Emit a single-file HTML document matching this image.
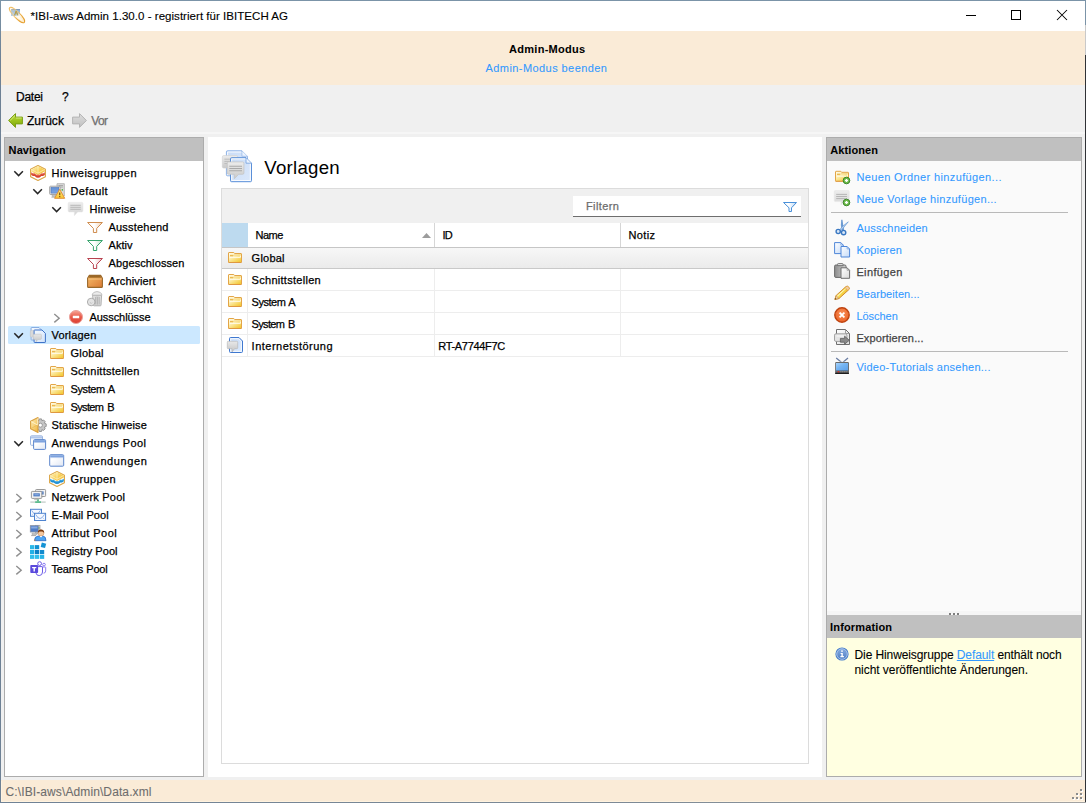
<!DOCTYPE html><html><head><meta charset="utf-8"><title>IBI-aws Admin</title><style>html,body{margin:0;padding:0;width:1086px;height:803px;overflow:hidden;background:#f0f0f0}
body{position:relative;font-family:"Liberation Sans",sans-serif;font-size:12px;color:#000}
.a{position:absolute;display:block}
.a svg{display:block;width:100%;height:100%;overflow:visible}
.t{position:absolute;white-space:nowrap;line-height:16px;height:16px;font-size:12px;-webkit-text-stroke:0.25px currentColor}
.b{font-weight:bold;-webkit-text-stroke:0.05px currentColor}
.ctr{text-align:center}
.lnk{color:#3399ff;-webkit-text-stroke:0.08px currentColor}
.u{text-decoration:underline}
.dis{color:#6e6e6e}
.dk{color:#444}
.ph{color:#6d6d6d}
.st{color:#6d6d6d;-webkit-text-stroke:0.08px currentColor}
.ttl{-webkit-text-stroke:0.12px currentColor}
.h1{font-size:18.67px;line-height:24px;height:24px;-webkit-text-stroke:0}
.panel{border:1px solid #a6a6a6;box-sizing:border-box}
.inf{-webkit-text-stroke:0.08px currentColor}
</style></head><body>
<div class="a" style="left:0px;top:0px;width:1086px;height:803px;background:#f0f0f0;"></div>
<div class="a" style="left:1px;top:1px;width:1084px;height:30px;background:#fff;"></div>
<div class="a" style="left:1px;top:31px;width:1084px;height:54px;background:#faebd7;"></div>
<div class="a" style="left:1px;top:780px;width:1084px;height:22px;background:#faebd7;"></div>
<div class="a" style="left:0px;top:0px;width:1086px;height:1px;background:#7b94a8;"></div>
<div class="a" style="left:0px;top:0px;width:1px;height:803px;background:linear-gradient(#7b94a8,#6e8195 60px);"></div>
<div class="a" style="left:1085px;top:0px;width:1px;height:803px;background:#303236;"></div>
<div class="a" style="left:1085px;top:25px;width:1px;height:30px;background:#c9c9c9;"></div>
<div class="a" style="left:1085px;top:0px;width:1px;height:25px;background:#7b94a8;"></div>
<div class="a" style="left:0px;top:802px;width:1086px;height:1px;background:linear-gradient(90deg,#6f8296,#7d8a96 60%,#a2a2a2);"></div>
<div class="a" style="left:1px;top:781px;width:1px;height:21px;background:#fff3e0;"></div>
<div class="a" style="left:1px;top:801px;width:1084px;height:1px;background:#fff3e0;"></div>
<div class="a" style="left:9px;top:7px;width:16px;height:16px"><svg viewBox="0 0 16 16"><defs><linearGradient id="apb_1" x1="0" y1="0" x2="0" y2="1"><stop offset="0" stop-color="#5f7fa6"/><stop offset=".2" stop-color="#8fb2d8"/><stop offset="1" stop-color="#b5d3f3"/></linearGradient>
<linearGradient id="apf_1" x1="0" y1="0" x2="1" y2="0"><stop offset="0" stop-color="#fde9c0" stop-opacity=".35"/><stop offset=".48" stop-color="#fff6e2" stop-opacity=".1"/><stop offset=".6" stop-color="#fffaf0" stop-opacity=".9"/><stop offset="1" stop-color="#fff1d6" stop-opacity="1"/></linearGradient>
<linearGradient id="aps_1" x1="0" y1="0" x2="1" y2="0"><stop offset="0" stop-color="#efb650"/><stop offset=".35" stop-color="#f3cb82" stop-opacity=".75"/><stop offset=".6" stop-color="#ecb048"/><stop offset="1" stop-color="#e39a28"/></linearGradient></defs>
<rect x="2" y="2.1" width="9" height="6.9" fill="url(#apb_1)"/>
<path d="M5 8.4 L6.5 3.8 L7.6 3.8 L9.4 8.4 L8.2 8.4 L7 5.4 L6.2 8.4Z" fill="#a08018"/>
<g transform="rotate(45 8 8)"><ellipse cx="8" cy="8" rx="10.4" ry="3" fill="url(#apf_1)" stroke="url(#aps_1)" stroke-width="1"/>
<ellipse cx="8.6" cy="8.3" rx="8.6" ry="1.6" fill="none" stroke="#f4d290" stroke-width=".6" opacity=".7" stroke-dasharray="1.2 .8"/></g></svg></div>
<div class="t ttl" style="left:30.5px;top:8px;font-size:11.5px;letter-spacing:0.038px;">*IBI-aws Admin 1.30.0 - registriert für IBITECH AG</div>
<div class="a" style="left:966px;top:10px;width:11px;height:11px"><svg viewBox="0 0 11 11"><rect x="0" y="5" width="10" height="1" fill="#000"/></svg></div>
<div class="a" style="left:1011px;top:10px;width:11px;height:11px"><svg viewBox="0 0 11 11"><rect x=".5" y=".5" width="9" height="9" fill="none" stroke="#000" stroke-width="1"/></svg></div>
<div class="a" style="left:1057px;top:10px;width:11px;height:11px"><svg viewBox="0 0 11 11"><path d="M0 0L10 10M10 0L0 10" stroke="#000" stroke-width="1.05" fill="none"/></svg></div>
<div class="t b" style="left:509.0px;top:41px;font-size:11px;letter-spacing:0.284px;">Admin-Modus</div>
<div class="t lnk" style="left:485.5px;top:60px;font-size:11px;letter-spacing:0.429px;">Admin-Modus beenden</div>
<div class="t " style="left:16.0px;top:89px;letter-spacing:-0.247px;">Datei</div>
<div class="t " style="left:62px;top:89px;">?</div>
<div class="a" style="left:8px;top:113px;width:16px;height:16px"><svg viewBox="0 0 16 16"><defs><linearGradient id="bkg_5" x1="0" y1="0" x2="0" y2="1"><stop offset="0" stop-color="#c3dd4a"/><stop offset=".5" stop-color="#9cc31c"/><stop offset="1" stop-color="#7ea70c"/></linearGradient></defs>
<path d="M7.5 .6 L.6 7.5 L7.5 14.4 L7.5 10.9 L14.4 10.9 L14.4 4.1 L7.5 4.1Z" fill="url(#bkg_5)" stroke="#7a9e14" stroke-width="1" stroke-linejoin="round"/>
<path d="M7 2.6 L2.2 7.4 M8 5 L13.6 5" stroke="#e3f19a" stroke-width=".9" fill="none" opacity=".8"/></svg></div>
<div class="t " style="left:27.0px;top:113px;letter-spacing:0.042px;">Zurück</div>
<div class="a" style="left:72px;top:113px;width:16px;height:16px"><svg viewBox="0 0 16 16"><defs><linearGradient id="fwg_6" x1="0" y1="0" x2="0" y2="1"><stop offset="0" stop-color="#dedede"/><stop offset="1" stop-color="#bfbfbf"/></linearGradient></defs>
<path d="M7.5 .6 L14.4 7.5 L7.5 14.4 L7.5 10.9 L.6 10.9 L.6 4.1 L7.5 4.1Z" fill="url(#fwg_6)" stroke="#b4b4b4" stroke-width="1" stroke-linejoin="round"/></svg></div>
<div class="t dis" style="left:91.3px;top:113px;letter-spacing:-0.688px;">Vor</div>
<div class="a" style="left:1px;top:132px;width:1084px;height:2px;background:#f6f6f6;"></div>
<div class="a" style="left:4px;top:137px;width:200px;height:640px;background:#fff;border:1px solid #acacac;box-sizing:border-box"></div>
<div class="a" style="left:5px;top:138px;width:198px;height:23px;background:#c0c0c0;"></div>
<div class="t b" style="left:8.6px;top:142px;font-size:11px;letter-spacing:0.109px;">Navigation</div>
<div class="a" style="left:8px;top:326px;width:192px;height:18px;background:#cce8ff;border-radius:1.5px"></div>
<div class="a" style="left:11px;top:165px;width:16px;height:16px"><svg viewBox="0 0 16 16"><path d="M3.3 6.3 L7.6 10.6 L11.9 6.3" fill="none" stroke="#262626" stroke-width="1.5"/></svg></div>
<div class="a" style="left:30px;top:165px;width:16px;height:16px"><svg viewBox="0 0 16 16"><defs><linearGradient id="hb1t_8" x1="0" y1="0" x2="1" y2="1"><stop offset="0" stop-color="#fff4c4"/><stop offset=".55" stop-color="#f8d057"/><stop offset="1" stop-color="#f2b93a"/></linearGradient></defs>
<path d="M8 .6 L15.4 4.3 V11.7 L8 15.4 L.6 11.7 V4.3Z" fill="#fff" stroke="#dba545" stroke-width="1.1" stroke-linejoin="round"/>
<path d="M8 1.1 L14.8 4.5 V6.6 L8 10 L1.2 6.6 V4.5Z" fill="url(#hb1t_8)"/>
<path d="M8 1.6 V8.4 M1.6 4.6 L8 8.2 L14.4 4.6" stroke="#fff8d8" stroke-width=".8" fill="none" opacity=".75"/>
<g transform="translate(0 .5)"><path d="M1.2 6.9 L3 8 L4.6 7.9 L6.4 9.3 L8 9.3 L9.6 9.3 L11.4 7.9 L13 8 L14.8 6.9 V9.4 L13 10.6 L11.4 10.5 L9.6 11.9 L8 12.2 L6.4 11.9 L4.6 10.5 L3 10.6 L1.2 9.4Z" fill="#d6442f"/>
<path d="M1.2 7.4 L3 8.5 L4.6 8.4 L6.4 9.8 L8 9.9 L9.6 9.8 L11.4 8.4 L13 8.5 L14.8 7.4" fill="none" stroke="#ee7d62" stroke-width=".8" opacity=".8"/></g></svg></div>
<div class="t " style="left:51.5px;top:165px;font-size:11px;letter-spacing:0.476px;">Hinweisgruppen</div>
<div class="a" style="left:30px;top:183px;width:16px;height:16px"><svg viewBox="0 0 16 16"><path d="M3.3 6.3 L7.6 10.6 L11.9 6.3" fill="none" stroke="#262626" stroke-width="1.5"/></svg></div>
<div class="a" style="left:49px;top:183px;width:16px;height:16px"><svg viewBox="0 0 16 16"><defs><linearGradient id="dfs_10" x1="0" y1="0" x2="0" y2="1"><stop offset="0" stop-color="#5f8fd6"/><stop offset="1" stop-color="#7fa6e2"/></linearGradient>
<linearGradient id="dfw_10" x1="0" y1="0" x2="0" y2="1"><stop offset="0" stop-color="#fff08a"/><stop offset="1" stop-color="#f9c52c"/></linearGradient></defs>
<path d="M8 .7 H15.3 V13 H8Z" fill="#dcdcdc" stroke="#a9a9a9" stroke-width=".8"/>
<path d="M9.5 2.5H14M9.5 4H14" stroke="#9c9c9c" stroke-width=".8"/><rect x="12.6" y="6.2" width="1.4" height="1.4" fill="#3fae3a"/>
<rect x=".7" y="3.2" width="10.3" height="8.3" rx=".8" fill="#e9e9e9" stroke="#9b9b9b" stroke-width=".9"/>
<rect x="2" y="4.5" width="7.7" height="5.6" fill="url(#dfs_10)" stroke="#4a73b8" stroke-width=".6"/>
<path d="M3.2 12 H7 V13.6 H3.2Z M2.4 14.3H8" fill="#cfcfcf" stroke="#a9a9a9" stroke-width=".7"/>
<path d="M10.7 6.3 L15.7 15.3 H5.6Z" fill="url(#dfw_10)" stroke="#e2913a" stroke-width="1" stroke-linejoin="round"/>
<path d="M10.7 9.4 V12.3" stroke="#8a5a10" stroke-width="1.3"/><rect x="10.05" y="13" width="1.3" height="1.2" fill="#8a5a10"/></svg></div>
<div class="t " style="left:70.5px;top:183px;font-size:11px;letter-spacing:0.387px;">Default</div>
<div class="a" style="left:49px;top:201px;width:16px;height:16px"><svg viewBox="0 0 16 16"><path d="M3.3 6.3 L7.6 10.6 L11.9 6.3" fill="none" stroke="#262626" stroke-width="1.5"/></svg></div>
<div class="a" style="left:68px;top:201px;width:16px;height:16px"><svg viewBox="0 0 16 16"><defs><linearGradient id="hwg_12" x1="0" y1="0" x2="0" y2="1"><stop offset="0" stop-color="#ededed"/><stop offset="1" stop-color="#d2d2d2"/></linearGradient></defs>
<path d="M1.2 1.4 H13.8 Q14.9 1.4 14.9 2.5 V9.8 Q14.9 10.9 13.8 10.9 H9.6 L6.4 14.6 V10.9 H1.2 Q.2 10.9 .2 9.8 V2.5 Q.2 1.4 1.2 1.4Z" fill="url(#hwg_12)" stroke="#e4e4e4" stroke-width=".6"/>
<path d="M2.3 4.3H12.8M2.3 6.3H12.8M2.3 8.3H12.8" stroke="#b3b3b3" stroke-width=".9"/></svg></div>
<div class="t " style="left:89.5px;top:201px;font-size:11px;letter-spacing:0.219px;">Hinweise</div>
<div class="a" style="left:87px;top:219px;width:16px;height:16px"><svg viewBox="0 0 16 16"><defs><linearGradient id="fo_13" x1="0" y1="0" x2="1" y2="0"><stop offset=".45" stop-color="#fff"/><stop offset="1" stop-color="#f1d3b5"/></linearGradient></defs>
<path d="M.6 3.5 H15.4 L9.7 9.4 V13.5 H6.4 V9.4Z" fill="url(#fo_13)" stroke="#cf8d4f" stroke-width="1" stroke-linejoin="miter"/></svg></div>
<div class="t " style="left:108.5px;top:219px;font-size:11px;letter-spacing:0.207px;">Ausstehend</div>
<div class="a" style="left:87px;top:237px;width:16px;height:16px"><svg viewBox="0 0 16 16"><defs><linearGradient id="fg_14" x1="0" y1="0" x2="1" y2="0"><stop offset=".45" stop-color="#fff"/><stop offset="1" stop-color="#bfe6cf"/></linearGradient></defs>
<path d="M.6 3.5 H15.4 L9.7 9.4 V13.5 H6.4 V9.4Z" fill="url(#fg_14)" stroke="#35a36c" stroke-width="1" stroke-linejoin="miter"/></svg></div>
<div class="t " style="left:108.5px;top:237px;font-size:11px;letter-spacing:0.066px;">Aktiv</div>
<div class="a" style="left:87px;top:255px;width:16px;height:16px"><svg viewBox="0 0 16 16"><defs><linearGradient id="fr_15" x1="0" y1="0" x2="1" y2="0"><stop offset=".45" stop-color="#fff"/><stop offset="1" stop-color="#eec0c4"/></linearGradient></defs>
<path d="M.6 3.5 H15.4 L9.7 9.4 V13.5 H6.4 V9.4Z" fill="url(#fr_15)" stroke="#b8414f" stroke-width="1" stroke-linejoin="miter"/></svg></div>
<div class="t " style="left:108.5px;top:255px;font-size:11px;letter-spacing:0.113px;">Abgeschlossen</div>
<div class="a" style="left:87px;top:273px;width:16px;height:16px"><svg viewBox="0 0 16 16"><defs><linearGradient id="arf_16" x1="0" y1="0" x2="1" y2="1"><stop offset="0" stop-color="#f6bb68"/><stop offset="1" stop-color="#d97a35"/></linearGradient>
<linearGradient id="art_16" x1="0" y1="0" x2="0" y2="1"><stop offset="0" stop-color="#8a5a1e"/><stop offset="1" stop-color="#c98c3e"/></linearGradient></defs>
<path d="M2.2 2.4 H13.8 L15.4 5.3 V13.4 Q15.4 14.4 14.4 14.4 H1.6 Q.6 14.4 .6 13.4 V5.3Z" fill="url(#arf_16)" stroke="#9a682a" stroke-width="1.1" stroke-linejoin="round"/>
<path d="M2.5 2.9 H13.5 L14.8 5.3 H1.2Z" fill="url(#art_16)"/>
<path d="M1.3 6 H14.7" stroke="#fbd9a0" stroke-width=".8" opacity=".8"/></svg></div>
<div class="t " style="left:108.5px;top:273px;font-size:11px;letter-spacing:0.137px;">Archiviert</div>
<div class="a" style="left:87px;top:291px;width:16px;height:16px"><svg viewBox="0 0 16 16"><defs><linearGradient id="trg_17" x1="0" y1="0" x2="1" y2="0"><stop offset="0" stop-color="#e9e9e9"/><stop offset=".5" stop-color="#cfcfcf"/><stop offset="1" stop-color="#e4e4e4"/></linearGradient></defs>
<path d="M5.6 4.2 H14.6 L14 14.2 Q14 14.8 13.3 14.8 H7.2 Q6.5 14.8 6.4 14.2Z" fill="url(#trg_17)" stroke="#a9a9a9" stroke-width=".9"/>
<path d="M5.2 4.2 Q5.2 1.2 10 .6 Q14.9 1.2 14.9 4.2Z" fill="#ececec" stroke="#b4b4b4" stroke-width=".8"/>
<path d="M8.6 6V13.5M10.4 6V13.5M12.2 6V13.5" stroke="#b0b0b0" stroke-width=".9"/>
<circle cx="4.2" cy="11" r="3.8" fill="#e3e3e3" stroke="#a6a6a6" stroke-width=".9"/>
<path d="M2.8 11.4 L4.4 12.4 L5.2 11.6" stroke="#b7b7b7" stroke-width=".8" fill="none"/></svg></div>
<div class="t " style="left:108.5px;top:291px;font-size:11px;letter-spacing:0.081px;">Gelöscht</div>
<div class="a" style="left:49px;top:309px;width:16px;height:16px"><svg viewBox="0 0 16 16"><path d="M5.3 5 L10.2 9.2 L5.3 13.4" fill="none" stroke="#8f8f8f" stroke-width="1.4"/></svg></div>
<div class="a" style="left:68px;top:309px;width:16px;height:16px"><svg viewBox="0 0 16 16"><defs><linearGradient id="exg_19" x1="0" y1="0" x2="0" y2="1"><stop offset="0" stop-color="#f7a596"/><stop offset=".5" stop-color="#e85a49"/><stop offset="1" stop-color="#dc4034"/></linearGradient></defs>
<circle cx="8" cy="8" r="6.5" fill="url(#exg_19)" stroke="#eba29c" stroke-width="1"/>
<rect x="4.8" y="6.8" width="6.4" height="2.5" rx=".3" fill="#fff"/></svg></div>
<div class="t " style="left:89.5px;top:309px;font-size:11px;letter-spacing:-0.069px;">Ausschlüsse</div>
<div class="a" style="left:11px;top:327px;width:16px;height:16px"><svg viewBox="0 0 16 16"><path d="M3.3 6.3 L7.6 10.6 L11.9 6.3" fill="none" stroke="#262626" stroke-width="1.5"/></svg></div>
<div class="a" style="left:30px;top:327px;width:16px;height:16px"><svg viewBox="0 0 16 16"><defs><linearGradient id="vd1_21" x1="0" y1="0" x2="1" y2="1"><stop offset="0" stop-color="#f7fbff"/><stop offset="1" stop-color="#cfe1fa"/></linearGradient><linearGradient id="vbb_21" x1="0" y1="0" x2="0" y2="1"><stop offset="0" stop-color="#e6e6e6"/><stop offset="1" stop-color="#c6c6c6"/></linearGradient></defs>
<path d="M1.6 .5 H9 L12 3.5 V12.5 Q12 13 11.5 13 H1.6 Q1.1 13 1.1 12.5 V1 Q1.1 .5 1.6 .5Z" fill="url(#vd1_21)" stroke="#7fa5de" stroke-width=".9"/>
<rect x=".3" y="3.4" width="7.2" height="6.6" rx="1" fill="#d9d9d9" stroke="#c4c4c4" stroke-width=".5"/>
<path d="M4.6 3 H12 L15.4 6.4 V15 Q15.4 15.5 14.9 15.5 H4.6 Q4.1 15.5 4.1 15 V3.5 Q4.1 3 4.6 3Z" fill="url(#vd1_21)" stroke="#3f73c8" stroke-width="1"/>
<path d="M3.9 7.2 H10.6 Q11.4 7.2 11.4 8 V11.6 Q11.4 12.4 10.6 12.4 H8 L6 14.8 V12.4 H3.9 Q3.1 12.4 3.1 11.6 V8 Q3.1 7.2 3.9 7.2Z" fill="url(#vbb_21)" stroke="#bdbdbd" stroke-width=".5"/></svg></div>
<div class="t " style="left:51.5px;top:327px;font-size:11px;letter-spacing:0.191px;">Vorlagen</div>
<div class="a" style="left:49px;top:346px;width:16px;height:16px"><svg viewBox="0 0 16 16"><defs><linearGradient id="fdg_22" x1="0" y1="0" x2=".7" y2="1"><stop offset="0" stop-color="#fffdf0"/><stop offset=".4" stop-color="#fef2bd"/><stop offset="1" stop-color="#f4cb3c"/></linearGradient></defs>
<path d="M1.5 3 Q1.5 2.5 2 2.5 H6.8 L7.6 3.5 H14 Q14.5 3.5 14.5 4 V12 Q14.5 12.5 14 12.5 H2 Q1.5 12.5 1.5 12Z" fill="url(#fdg_22)" stroke="#e3a547" stroke-width="1"/>
<path d="M1.6 12.5H14.4" stroke="#de8f3c" stroke-width="1" opacity=".6"/>
<path d="M3 5.6 H6" stroke="#ecb850" stroke-width="1.5"/>
<path d="M5.8 5.8 L7 5 H13.4" stroke="#f3d07a" stroke-width=".9" fill="none"/>
<path d="M2.6 7.4 H13.4 V5.6" stroke="#fffdf2" stroke-width=".9" fill="none" opacity=".95"/></svg></div>
<div class="t " style="left:70.5px;top:345px;font-size:11px;letter-spacing:0.246px;">Global</div>
<div class="a" style="left:49px;top:364px;width:16px;height:16px"><svg viewBox="0 0 16 16"><defs><linearGradient id="fdg_23" x1="0" y1="0" x2=".7" y2="1"><stop offset="0" stop-color="#fffdf0"/><stop offset=".4" stop-color="#fef2bd"/><stop offset="1" stop-color="#f4cb3c"/></linearGradient></defs>
<path d="M1.5 3 Q1.5 2.5 2 2.5 H6.8 L7.6 3.5 H14 Q14.5 3.5 14.5 4 V12 Q14.5 12.5 14 12.5 H2 Q1.5 12.5 1.5 12Z" fill="url(#fdg_23)" stroke="#e3a547" stroke-width="1"/>
<path d="M1.6 12.5H14.4" stroke="#de8f3c" stroke-width="1" opacity=".6"/>
<path d="M3 5.6 H6" stroke="#ecb850" stroke-width="1.5"/>
<path d="M5.8 5.8 L7 5 H13.4" stroke="#f3d07a" stroke-width=".9" fill="none"/>
<path d="M2.6 7.4 H13.4 V5.6" stroke="#fffdf2" stroke-width=".9" fill="none" opacity=".95"/></svg></div>
<div class="t " style="left:70.5px;top:363px;font-size:11px;letter-spacing:0.264px;">Schnittstellen</div>
<div class="a" style="left:49px;top:382px;width:16px;height:16px"><svg viewBox="0 0 16 16"><defs><linearGradient id="fdg_24" x1="0" y1="0" x2=".7" y2="1"><stop offset="0" stop-color="#fffdf0"/><stop offset=".4" stop-color="#fef2bd"/><stop offset="1" stop-color="#f4cb3c"/></linearGradient></defs>
<path d="M1.5 3 Q1.5 2.5 2 2.5 H6.8 L7.6 3.5 H14 Q14.5 3.5 14.5 4 V12 Q14.5 12.5 14 12.5 H2 Q1.5 12.5 1.5 12Z" fill="url(#fdg_24)" stroke="#e3a547" stroke-width="1"/>
<path d="M1.6 12.5H14.4" stroke="#de8f3c" stroke-width="1" opacity=".6"/>
<path d="M3 5.6 H6" stroke="#ecb850" stroke-width="1.5"/>
<path d="M5.8 5.8 L7 5 H13.4" stroke="#f3d07a" stroke-width=".9" fill="none"/>
<path d="M2.6 7.4 H13.4 V5.6" stroke="#fffdf2" stroke-width=".9" fill="none" opacity=".95"/></svg></div>
<div class="t " style="left:70.5px;top:381px;font-size:11px;letter-spacing:-0.386px;word-spacing:0.81px;">System A</div>
<div class="a" style="left:49px;top:400px;width:16px;height:16px"><svg viewBox="0 0 16 16"><defs><linearGradient id="fdg_25" x1="0" y1="0" x2=".7" y2="1"><stop offset="0" stop-color="#fffdf0"/><stop offset=".4" stop-color="#fef2bd"/><stop offset="1" stop-color="#f4cb3c"/></linearGradient></defs>
<path d="M1.5 3 Q1.5 2.5 2 2.5 H6.8 L7.6 3.5 H14 Q14.5 3.5 14.5 4 V12 Q14.5 12.5 14 12.5 H2 Q1.5 12.5 1.5 12Z" fill="url(#fdg_25)" stroke="#e3a547" stroke-width="1"/>
<path d="M1.6 12.5H14.4" stroke="#de8f3c" stroke-width="1" opacity=".6"/>
<path d="M3 5.6 H6" stroke="#ecb850" stroke-width="1.5"/>
<path d="M5.8 5.8 L7 5 H13.4" stroke="#f3d07a" stroke-width=".9" fill="none"/>
<path d="M2.6 7.4 H13.4 V5.6" stroke="#fffdf2" stroke-width=".9" fill="none" opacity=".95"/></svg></div>
<div class="t " style="left:70.5px;top:399px;font-size:11px;letter-spacing:-0.632px;word-spacing:1.33px;">System B</div>
<div class="a" style="left:30px;top:417px;width:16px;height:16px"><svg viewBox="0 0 16 16"><defs><linearGradient id="stg_26" x1="0" y1="0" x2="1" y2="1"><stop offset="0" stop-color="#fff2bf"/><stop offset="1" stop-color="#eeb23a"/></linearGradient></defs>
<g transform="translate(10.4 8.2)"><path d="M-1.1 -6.3 H1.1 L1.5 -4.5 L3.2 -5.2 L4.8 -3.6 L3.9 -2 L5.8 -1.3 V1.3 L3.9 2 L4.8 3.6 L3.2 5.2 L1.5 4.5 L1.1 6.3 H-1.1 L-1.5 4.5 L-3.2 5.2 L-4.8 3.6 L-3.9 2 L-5.8 1.3 V-1.3 L-3.9 -2 L-4.8 -3.6 L-3.2 -5.2 L-1.5 -4.5Z" fill="#c6c6c6" stroke="#8c8c8c" stroke-width=".9"/><circle r="2" fill="#fff" stroke="#8c8c8c" stroke-width=".8"/></g>
<path d="M8 .6 V15.4 L.6 11.7 V4.3Z" fill="url(#stg_26)" stroke="#d9a040" stroke-width="1.1" stroke-linejoin="round"/>
<path d="M1.2 4.6 L7.6 8 V1.4" fill="none" stroke="#fff7d8" stroke-width=".9" opacity=".9"/>
<path d="M7.5 8 L1.2 11.4" fill="none" stroke="#e8b850" stroke-width=".7"/></svg></div>
<div class="t " style="left:51.5px;top:417px;font-size:11px;letter-spacing:0.137px;">Statische Hinweise</div>
<div class="a" style="left:11px;top:435px;width:16px;height:16px"><svg viewBox="0 0 16 16"><path d="M3.3 6.3 L7.6 10.6 L11.9 6.3" fill="none" stroke="#262626" stroke-width="1.5"/></svg></div>
<div class="a" style="left:30px;top:435px;width:16px;height:16px"><svg viewBox="0 0 16 16"><defs><linearGradient id="wg1_28" x1="0" y1="0" x2="1" y2="1"><stop offset=".3" stop-color="#fff"/><stop offset="1" stop-color="#dfe6f3"/></linearGradient></defs><g opacity="0.6"><rect x="0.5" y="0.8" width="12" height="9.5" rx="1" fill="url(#wg1_28)" stroke="#5c86cc" stroke-width="1"/>
<path d="M1 1.3 H12 V3.3 H1Z" fill="#7ea3de"/><path d="M1 3.6999999999999997 H12" stroke="#a9c2ea" stroke-width=".8"/></g><g opacity="1.0"><rect x="3.6" y="4.6" width="12" height="9.8" rx="1" fill="url(#wg1_28)" stroke="#5c86cc" stroke-width="1"/>
<path d="M4.1 5.1 H15.100000000000001 V7.1 H4.1Z" fill="#7ea3de"/><path d="M4.1 7.5 H15.100000000000001" stroke="#a9c2ea" stroke-width=".8"/></g></svg></div>
<div class="t " style="left:51.5px;top:435px;font-size:11px;letter-spacing:0.411px;">Anwendungs Pool</div>
<div class="a" style="left:49px;top:453px;width:16px;height:16px"><svg viewBox="0 0 16 16"><defs><linearGradient id="wg2_29" x1="0" y1="0" x2="1" y2="1"><stop offset=".3" stop-color="#fff"/><stop offset="1" stop-color="#dfe6f3"/></linearGradient></defs><g opacity="1.0"><rect x="0.7" y="1.7" width="14" height="11.5" rx="1" fill="url(#wg2_29)" stroke="#5c86cc" stroke-width="1"/>
<path d="M1.2 2.2 H14.2 V4.2 H1.2Z" fill="#7ea3de"/><path d="M1.2 4.6 H14.2" stroke="#a9c2ea" stroke-width=".8"/></g></svg></div>
<div class="t " style="left:70.5px;top:453px;font-size:11px;letter-spacing:0.592px;">Anwendungen</div>
<div class="a" style="left:49px;top:471px;width:16px;height:16px"><svg viewBox="0 0 16 16"><defs><linearGradient id="hb2t_30" x1="0" y1="0" x2="1" y2="1"><stop offset="0" stop-color="#fff4c4"/><stop offset=".55" stop-color="#f8d057"/><stop offset="1" stop-color="#f2b93a"/></linearGradient></defs>
<path d="M8 .6 L15.4 4.3 V11.7 L8 15.4 L.6 11.7 V4.3Z" fill="#fff" stroke="#dba545" stroke-width="1.1" stroke-linejoin="round"/>
<path d="M8 1.1 L14.8 4.5 V6.6 L8 10 L1.2 6.6 V4.5Z" fill="url(#hb2t_30)"/>
<path d="M8 1.6 V8.4 M1.6 4.6 L8 8.2 L14.4 4.6" stroke="#fff8d8" stroke-width=".8" fill="none" opacity=".75"/>
<g transform="translate(0 .9)"><path d="M1.2 6.9 L3 8 L4.6 7.9 L6.4 9.3 L8 9.3 L9.6 9.3 L11.4 7.9 L13 8 L14.8 6.9 V9.4 L13 10.6 L11.4 10.5 L9.6 11.9 L8 12.2 L6.4 11.9 L4.6 10.5 L3 10.6 L1.2 9.4Z" fill="#1f8fd2"/>
<path d="M1.2 7.4 L3 8.5 L4.6 8.4 L6.4 9.8 L8 9.9 L9.6 9.8 L11.4 8.4 L13 8.5 L14.8 7.4" fill="none" stroke="#55b4ea" stroke-width=".8" opacity=".8"/></g></svg></div>
<div class="t " style="left:70.5px;top:471px;font-size:11px;letter-spacing:0.392px;">Gruppen</div>
<div class="a" style="left:11px;top:489px;width:16px;height:16px"><svg viewBox="0 0 16 16"><path d="M5.3 5 L10.2 9.2 L5.3 13.4" fill="none" stroke="#8f8f8f" stroke-width="1.4"/></svg></div>
<div class="a" style="left:30px;top:489px;width:16px;height:16px"><svg viewBox="0 0 16 16"><rect x="5.6" y="0.5" width="10" height="7" rx=".8" fill="#f3f3f3" stroke="#8f8f8f" stroke-width=".9"/><rect x="7.6" y="2.4" width="6" height="3.1" fill="#4a78c0"/><rect x="8.6" y="3.2" width="4" height="1.3" fill="#86a8de"/><rect x="1.4" y="2.4" width="10.4" height="7" rx=".8" fill="#f3f3f3" stroke="#8f8f8f" stroke-width=".9"/><rect x="3.4" y="4.3" width="6.4" height="3.1" fill="#4a78c0"/><rect x="4.4" y="5.1" width="4.4" height="1.3" fill="#86a8de"/><path d="M4.4 9.6 Q6.6 11 8.8 9.6 V10.8 H4.4Z" fill="#d6d6d6" stroke="#a6a6a6" stroke-width=".5"/>
<path d="M8 10.6 V12.8" stroke="#43b47a" stroke-width="1.6"/><path d="M.3 13.1 H15.7" stroke="#c3cdc8" stroke-width="1.3"/><path d="M5.2 13.1H11" stroke="#49b981" stroke-width="1.5"/></svg></div>
<div class="t " style="left:51.5px;top:489px;font-size:11px;letter-spacing:0.209px;">Netzwerk Pool</div>
<div class="a" style="left:11px;top:507px;width:16px;height:16px"><svg viewBox="0 0 16 16"><path d="M5.3 5 L10.2 9.2 L5.3 13.4" fill="none" stroke="#8f8f8f" stroke-width="1.4"/></svg></div>
<div class="a" style="left:30px;top:507px;width:16px;height:16px"><svg viewBox="0 0 16 16"><rect x="0.5" y="2.3" width="11" height="7" fill="#f6f9ff" stroke="#4f84cf" stroke-width="1"/><path d="M1.6 3.4000000000000004 Q6.0 11.4 10.4 3.4000000000000004" fill="none" stroke="#7ea6e2" stroke-width=".9"/><path d="M1.6 8.200000000000001 L4.08 5.96 M10.4 8.200000000000001 L7.92 5.96" stroke="#b5cbef" stroke-width=".8"/><rect x="4.5" y="6.3" width="11.1" height="7.199999999999999" fill="#f6f9ff" stroke="#4f84cf" stroke-width="1"/><path d="M5.6 7.4 Q10.05 15.639999999999997 14.500000000000002 7.4" fill="none" stroke="#7ea6e2" stroke-width=".9"/><path d="M5.6 12.4 L8.114 10.064 M14.500000000000002 12.4 L11.986 10.064" stroke="#b5cbef" stroke-width=".8"/></svg></div>
<div class="t " style="left:51.5px;top:507px;font-size:11px;letter-spacing:0.098px;">E-Mail Pool</div>
<div class="a" style="left:11px;top:525px;width:16px;height:16px"><svg viewBox="0 0 16 16"><path d="M5.3 5 L10.2 9.2 L5.3 13.4" fill="none" stroke="#8f8f8f" stroke-width="1.4"/></svg></div>
<div class="a" style="left:30px;top:525px;width:16px;height:16px"><svg viewBox="0 0 16 16"><rect x="5.6" y=".3" width="4.4" height="8" fill="#d8d8d8" stroke="#9d9d9d" stroke-width=".7"/><rect x="8.2" y="2.2" width="1.2" height="1.6" fill="#3fae3a"/>
<rect x=".3" y=".6" width="8" height="6.4" fill="#4f7cc6" stroke="#8a93a3" stroke-width=".8"/><rect x="1.2" y="1.5" width="6.2" height="2" fill="#86a9e0"/>
<path d="M2 8.2H7V9.6H2Z" fill="#cfcfcf" stroke="#a0a0a0" stroke-width=".6"/><path d="M1.2 10.6H6" stroke="#a6a6a6" stroke-width="1"/>
<path d="M4.4 15.7 Q4.6 11.4 8 11 H13 Q16 11.4 16 15.7Z" fill="#4ba3f3" stroke="#1f5fc0" stroke-width=".7"/>
<path d="M4.4 15.8 L5.4 14.6" stroke="#e58a2c" stroke-width="1"/>
<circle cx="11" cy="8" r="3" fill="#f5c9a0" stroke="#c98a5a" stroke-width=".5"/>
<path d="M7.9 8 Q7.6 4.6 11 4.5 Q14.4 4.6 14.1 8 Q13 6.4 11 6.6 Q9 6.4 7.9 8Z" fill="#7a3a10"/>
<path d="M9.5 11 L11 12.4 L12.5 11Z" fill="#fff"/></svg></div>
<div class="t " style="left:51.5px;top:525px;font-size:11px;letter-spacing:0.434px;">Attribut Pool</div>
<div class="a" style="left:11px;top:543px;width:16px;height:16px"><svg viewBox="0 0 16 16"><path d="M5.3 5 L10.2 9.2 L5.3 13.4" fill="none" stroke="#8f8f8f" stroke-width="1.4"/></svg></div>
<div class="a" style="left:30px;top:543px;width:16px;height:16px"><svg viewBox="0 0 16 16"><rect x="0" y="2.1" width="4.3" height="4.1" fill="#2bb8e9"/><rect x="4.9" y="2.1" width="4.3" height="4.1" fill="#1191d2"/><rect x="0" y="7" width="4.3" height="4.1" fill="#22b1e6"/><rect x="4.9" y="7" width="4.3" height="4.1" fill="#0b80c5"/><rect x="9.9" y="7" width="4.3" height="4.1" fill="#128acd"/><rect x="0" y="11.8" width="4.3" height="4.1" fill="#31beec"/><rect x="4.9" y="11.8" width="4.3" height="4.1" fill="#31beec"/><rect x="9.9" y="11.8" width="4.3" height="4.1" fill="#27b4e7"/><rect x="11.2" y=".1" width="4.5" height="4.5" fill="#1592d4" transform="rotate(15 13.4 2.3)"/></svg></div>
<div class="t " style="left:51.5px;top:543px;font-size:11px;letter-spacing:0.051px;">Registry Pool</div>
<div class="a" style="left:11px;top:561px;width:16px;height:16px"><svg viewBox="0 0 16 16"><path d="M5.3 5 L10.2 9.2 L5.3 13.4" fill="none" stroke="#8f8f8f" stroke-width="1.4"/></svg></div>
<div class="a" style="left:30px;top:561px;width:16px;height:16px"><svg viewBox="0 0 16 16"><circle cx="9.6" cy="2.6" r="1.9" fill="#fff" stroke="#6c5ce6" stroke-width="1"/>
<circle cx="14" cy="3.6" r="1.35" fill="#fff" stroke="#8373f0" stroke-width=".9"/>
<path d="M12.4 6 H15.2 Q15.7 6 15.7 6.5 V10 Q15.7 12 13.6 12.2" fill="#fff" stroke="#8373f0" stroke-width=".9"/>
<path d="M6.5 5.6 H12 Q12.5 5.6 12.5 6.1 V11 Q12.5 14.4 9.2 14.6 Q6.4 14.6 6 12" fill="#fff" stroke="#6c5ce6" stroke-width="1"/>
<rect x=".3" y="3.9" width="7.8" height="8.2" rx=".8" fill="#5a49dc"/>
<path d="M2.1 5.9H6.3V7.2H4.9V10.5H3.5V7.2H2.1Z" fill="#fff"/></svg></div>
<div class="t " style="left:51.5px;top:561px;font-size:11px;letter-spacing:-0.184px;word-spacing:0.41px;">Teams Pool</div>
<div class="a" style="left:208px;top:137px;width:614px;height:640px;background:#fff;"></div>
<div class="a" style="left:221px;top:150px;width:32px;height:32px"><svg viewBox="0 0 32 32"><defs><linearGradient id="bd1_41" x1="0" y1="0" x2="1" y2="1"><stop offset="0" stop-color="#c9dcf7"/><stop offset="1" stop-color="#dbe8fb"/></linearGradient>
<linearGradient id="bb1_41" x1="0" y1="0" x2="0" y2="1"><stop offset="0" stop-color="#ececec"/><stop offset="1" stop-color="#c9c9c9"/></linearGradient></defs><path d="M6.4 0.8 H20.9 L26.4 6.3 V24.8 Q26.4 25.8 25.4 25.8 H6.4 Q5.4 25.8 5.4 24.8 V1.8 Q5.4 0.8 6.4 0.8Z" fill="url(#bd1_41)" stroke="#8fb3e6" stroke-width="1"/><path d="M6.6000000000000005 2.0 H20.4 L25.2 6.8 V24.6 H6.6000000000000005Z" fill="none" stroke="#fff" stroke-width="1" opacity=".85"/><path d="M20.9 0.8 V6.3 H26.4" fill="#eef5ff" stroke="#8fb3e6" stroke-width=".8" opacity=".8"/><rect x="1.3" y="5.5" width="15.5" height="12.6" rx="1.6" fill="url(#bb1_41)" stroke="#d0d0d0" stroke-width=".6"/><path d="M3.4 9.2H9M3.4 11.4H9M3.4 13.6H9" stroke="#bcbcbc" stroke-width="1"/><path d="M10.5 7.7 H25.0 L30.5 13.2 V30.7 Q30.5 31.7 29.5 31.7 H10.5 Q9.5 31.7 9.5 30.7 V8.7 Q9.5 7.7 10.5 7.7Z" fill="url(#bd1_41)" stroke="#5a8fd8" stroke-width="1"/><path d="M10.7 8.9 H24.5 L29.3 13.7 V30.5 H10.7Z" fill="none" stroke="#fff" stroke-width="1" opacity=".85"/><path d="M25.0 7.7 V13.2 H30.5" fill="#eef5ff" stroke="#5a8fd8" stroke-width=".8" opacity=".8"/><path d="M7.6 11.9 H21.6 Q22.9 11.9 22.9 13.2 V23 Q22.9 24.3 21.6 24.3 H17.6 L13.4 28.8 L13.2 24.3 H7.6 Q6.3 24.3 6.3 23 V13.2 Q6.3 11.9 7.6 11.9Z" fill="url(#bb1_41)" stroke="#c2c2c2" stroke-width=".7"/>
<path d="M8.3 16.2H21M8.3 18.5H21M8.3 20.8H21" stroke="#a9a9a9" stroke-width="1.1"/></svg></div>
<div class="t h1" style="left:264.3px;top:156px;letter-spacing:0.247px;">Vorlagen</div>
<div class="a" style="left:221px;top:188px;width:588px;height:576px;background:#fff;border:1px solid #dcdcdc;box-sizing:border-box"></div>
<div class="a" style="left:222px;top:189px;width:586px;height:34px;background:#f0f0f0;"></div>
<div class="a" style="left:573px;top:196px;width:228px;height:20px;background:#fff;border-bottom:1px solid #6e6e6e"></div>
<div class="t ph" style="left:586.0px;top:198px;font-size:11px;letter-spacing:0.400px;">Filtern</div>
<div class="a" style="left:782px;top:199px;width:16px;height:16px"><svg viewBox="0 0 16 16"><defs><linearGradient id="flt_42" x1="0" y1="0" x2="1" y2="0"><stop offset=".4" stop-color="#fff"/><stop offset="1" stop-color="#b9d7f5"/></linearGradient></defs>
<path d="M1.5 3.5 H14.5 L9.5 8.8 V12.5 H7 V8.8Z" fill="url(#flt_42)" stroke="#4a90d9" stroke-width="1" stroke-linejoin="miter"/></svg></div>
<div class="a" style="left:222px;top:223px;width:26px;height:24px;background:#bddaef;"></div>
<div class="a" style="left:222px;top:247px;width:586px;height:1px;background:#c6c6c6;"></div>
<div class="a" style="left:434px;top:223px;width:1px;height:24px;background:#d6d6d6;"></div>
<div class="a" style="left:620px;top:223px;width:1px;height:24px;background:#d6d6d6;"></div>
<div class="t sb" style="left:255.6px;top:227px;font-size:11px;letter-spacing:-0.528px;">Name</div>
<div class="t sb" style="left:442.6px;top:227px;font-size:11px;letter-spacing:-0.976px;">ID</div>
<div class="t sb" style="left:628.4px;top:227px;font-size:11px;letter-spacing:0.385px;">Notiz</div>
<div class="a" style="left:422px;top:233px;width:9px;height:5px"><svg viewBox="0 0 9 5"><path d="M0 5 L4.5 0 L9 5Z" fill="#9c9c9c"/></svg></div>
<div class="a" style="left:222px;top:248px;width:586px;height:20px;background:linear-gradient(#f7f7f7,#ebebeb);"></div>
<div class="a" style="left:222px;top:268px;width:586px;height:1px;background:#c9c9c9;"></div>
<div class="a" style="left:227px;top:250px;width:16px;height:16px"><svg viewBox="0 0 16 16"><defs><linearGradient id="fdg_43" x1="0" y1="0" x2=".7" y2="1"><stop offset="0" stop-color="#fffdf0"/><stop offset=".4" stop-color="#fef2bd"/><stop offset="1" stop-color="#f4cb3c"/></linearGradient></defs>
<path d="M1.5 3 Q1.5 2.5 2 2.5 H6.8 L7.6 3.5 H14 Q14.5 3.5 14.5 4 V12 Q14.5 12.5 14 12.5 H2 Q1.5 12.5 1.5 12Z" fill="url(#fdg_43)" stroke="#e3a547" stroke-width="1"/>
<path d="M1.6 12.5H14.4" stroke="#de8f3c" stroke-width="1" opacity=".6"/>
<path d="M3 5.6 H6" stroke="#ecb850" stroke-width="1.5"/>
<path d="M5.8 5.8 L7 5 H13.4" stroke="#f3d07a" stroke-width=".9" fill="none"/>
<path d="M2.6 7.4 H13.4 V5.6" stroke="#fffdf2" stroke-width=".9" fill="none" opacity=".95"/></svg></div>
<div class="t " style="left:251.6px;top:250px;font-size:11px;letter-spacing:0.226px;">Global</div>
<div class="a" style="left:227px;top:272px;width:16px;height:16px"><svg viewBox="0 0 16 16"><defs><linearGradient id="fdg_44" x1="0" y1="0" x2=".7" y2="1"><stop offset="0" stop-color="#fffdf0"/><stop offset=".4" stop-color="#fef2bd"/><stop offset="1" stop-color="#f4cb3c"/></linearGradient></defs>
<path d="M1.5 3 Q1.5 2.5 2 2.5 H6.8 L7.6 3.5 H14 Q14.5 3.5 14.5 4 V12 Q14.5 12.5 14 12.5 H2 Q1.5 12.5 1.5 12Z" fill="url(#fdg_44)" stroke="#e3a547" stroke-width="1"/>
<path d="M1.6 12.5H14.4" stroke="#de8f3c" stroke-width="1" opacity=".6"/>
<path d="M3 5.6 H6" stroke="#ecb850" stroke-width="1.5"/>
<path d="M5.8 5.8 L7 5 H13.4" stroke="#f3d07a" stroke-width=".9" fill="none"/>
<path d="M2.6 7.4 H13.4 V5.6" stroke="#fffdf2" stroke-width=".9" fill="none" opacity=".95"/></svg></div>
<div class="t " style="left:251.6px;top:272px;font-size:11px;letter-spacing:0.280px;">Schnittstellen</div>
<div class="a" style="left:222px;top:290px;width:586px;height:1px;background:#ededed;"></div>
<div class="a" style="left:227px;top:294px;width:16px;height:16px"><svg viewBox="0 0 16 16"><defs><linearGradient id="fdg_45" x1="0" y1="0" x2=".7" y2="1"><stop offset="0" stop-color="#fffdf0"/><stop offset=".4" stop-color="#fef2bd"/><stop offset="1" stop-color="#f4cb3c"/></linearGradient></defs>
<path d="M1.5 3 Q1.5 2.5 2 2.5 H6.8 L7.6 3.5 H14 Q14.5 3.5 14.5 4 V12 Q14.5 12.5 14 12.5 H2 Q1.5 12.5 1.5 12Z" fill="url(#fdg_45)" stroke="#e3a547" stroke-width="1"/>
<path d="M1.6 12.5H14.4" stroke="#de8f3c" stroke-width="1" opacity=".6"/>
<path d="M3 5.6 H6" stroke="#ecb850" stroke-width="1.5"/>
<path d="M5.8 5.8 L7 5 H13.4" stroke="#f3d07a" stroke-width=".9" fill="none"/>
<path d="M2.6 7.4 H13.4 V5.6" stroke="#fffdf2" stroke-width=".9" fill="none" opacity=".95"/></svg></div>
<div class="t " style="left:251.6px;top:294px;font-size:11px;letter-spacing:-0.488px;word-spacing:1.03px;">System A</div>
<div class="a" style="left:222px;top:312px;width:586px;height:1px;background:#ededed;"></div>
<div class="a" style="left:227px;top:316px;width:16px;height:16px"><svg viewBox="0 0 16 16"><defs><linearGradient id="fdg_46" x1="0" y1="0" x2=".7" y2="1"><stop offset="0" stop-color="#fffdf0"/><stop offset=".4" stop-color="#fef2bd"/><stop offset="1" stop-color="#f4cb3c"/></linearGradient></defs>
<path d="M1.5 3 Q1.5 2.5 2 2.5 H6.8 L7.6 3.5 H14 Q14.5 3.5 14.5 4 V12 Q14.5 12.5 14 12.5 H2 Q1.5 12.5 1.5 12Z" fill="url(#fdg_46)" stroke="#e3a547" stroke-width="1"/>
<path d="M1.6 12.5H14.4" stroke="#de8f3c" stroke-width="1" opacity=".6"/>
<path d="M3 5.6 H6" stroke="#ecb850" stroke-width="1.5"/>
<path d="M5.8 5.8 L7 5 H13.4" stroke="#f3d07a" stroke-width=".9" fill="none"/>
<path d="M2.6 7.4 H13.4 V5.6" stroke="#fffdf2" stroke-width=".9" fill="none" opacity=".95"/></svg></div>
<div class="t " style="left:251.6px;top:316px;font-size:11px;letter-spacing:-0.671px;word-spacing:1.40px;">System B</div>
<div class="a" style="left:222px;top:334px;width:586px;height:1px;background:#ededed;"></div>
<div class="a" style="left:227px;top:337px;width:16px;height:16px"><svg viewBox="0 0 16 16"><defs><linearGradient id="sd1_47" x1="0" y1="0" x2="1" y2="1"><stop offset="0" stop-color="#c6dbf8"/><stop offset="1" stop-color="#dbe9fc"/></linearGradient>
<linearGradient id="sb1_47" x1="0" y1="0" x2="0" y2="1"><stop offset="0" stop-color="#e8e8e8"/><stop offset="1" stop-color="#c4c4c4"/></linearGradient></defs>
<path d="M3.5 .5 H12 L15.5 4 V14.5 Q15.5 15.5 14.5 15.5 H3.5 Q2.5 15.5 2.5 14.5 V1.5 Q2.5 .5 3.5 .5Z" fill="url(#sd1_47)" stroke="#3f78d0" stroke-width="1"/>
<path d="M3.7 1.7 H11.5 L14.3 4.5 V14.3 H3.7Z" fill="none" stroke="#fff" stroke-width=".9" opacity=".9"/>
<path d="M1.2 4.3 H9.8 Q10.7 4.3 10.7 5.2 V10.8 Q10.7 11.7 9.8 11.7 H7.6 L5 15 V11.7 H1.2 Q.3 11.7 .3 10.8 V5.2 Q.3 4.3 1.2 4.3Z" fill="url(#sb1_47)" stroke="#b3b3b3" stroke-width=".6"/></svg></div>
<div class="t " style="left:251.6px;top:338px;font-size:11px;letter-spacing:0.498px;">Internetstörung</div>
<div class="t " style="left:438.3px;top:338px;font-size:11px;letter-spacing:-0.328px;">RT-A7744F7C</div>
<div class="a" style="left:222px;top:356px;width:586px;height:1px;background:#ededed;"></div>
<div class="a" style="left:247px;top:269px;width:1px;height:88px;background:#ededed;"></div>
<div class="a" style="left:434px;top:269px;width:1px;height:88px;background:#ededed;"></div>
<div class="a" style="left:620px;top:269px;width:1px;height:88px;background:#ededed;"></div>
<div class="a" style="left:826px;top:137px;width:256px;height:640px;background:#fafafa;border:1px solid #acacac;box-sizing:border-box"></div>
<div class="a" style="left:827px;top:138px;width:254px;height:23px;background:#c0c0c0;"></div>
<div class="t b" style="left:830.3px;top:142px;font-size:11px;letter-spacing:0.094px;">Aktionen</div>
<div class="a" style="left:834px;top:168px;width:16px;height:16px"><svg viewBox="0 0 16 16"><defs><linearGradient id="fdg2_48" x1="0" y1="0" x2=".7" y2="1"><stop offset="0" stop-color="#fffdf0"/><stop offset=".4" stop-color="#fef2bd"/><stop offset="1" stop-color="#f4cb3c"/></linearGradient></defs>
<g transform="translate(0 .8)"><path d="M1.5 3 Q1.5 2.5 2 2.5 H6.8 L7.6 3.5 H14 Q14.5 3.5 14.5 4 V12 Q14.5 12.5 14 12.5 H2 Q1.5 12.5 1.5 12Z" fill="url(#fdg2_48)" stroke="#e3a547" stroke-width="1"/>
<path d="M1.6 12.5H14.4" stroke="#de8f3c" stroke-width="1" opacity=".6"/>
<path d="M3 5.6 H6" stroke="#ecb850" stroke-width="1.5"/>
<path d="M5.8 5.8 L7 5 H13.4" stroke="#f3d07a" stroke-width=".9" fill="none"/>
<path d="M2.6 7.4 H13.4 V5.6" stroke="#fffdf2" stroke-width=".9" fill="none" opacity=".95"/></g><circle cx="12.5" cy="12.5" r="3.3" fill="#5fb03c" stroke="#2f7d1e" stroke-width=".9"/><circle cx="12.5" cy="12.5" r="2.4" fill="none" stroke="#8fd36c" stroke-width=".5" opacity=".7"/><path d="M12.5 10.9 V14.1 M10.9 12.5 H14.1" stroke="#fff" stroke-width="1.3"/></svg></div>
<div class="t lnk" style="left:856.4px;top:169px;font-size:11px;letter-spacing:0.373px;">Neuen Ordner hinzufügen...</div>
<div class="a" style="left:834px;top:190px;width:16px;height:16px"><svg viewBox="0 0 16 16"><defs><linearGradient id="tpg_49" x1="0" y1="0" x2="0" y2="1"><stop offset="0" stop-color="#ededed"/><stop offset="1" stop-color="#d6d6d6"/></linearGradient></defs>
<path d="M1.3 .6 H14.1 Q15.1 .6 15.1 1.6 V10.6 Q15.1 11.6 14.1 11.6 H10 L7.2 14.8 V11.6 H1.3 Q.3 11.6 .3 10.6 V1.6 Q.3 .6 1.3 .6Z" fill="url(#tpg_49)" stroke="#e6e6e6" stroke-width=".6"/>
<path d="M2.2 4.4H13M2.2 6.5H13M2.2 8.6H13" stroke="#b6b6b6" stroke-width="1"/><circle cx="12.5" cy="12.5" r="3.3" fill="#5fb03c" stroke="#2f7d1e" stroke-width=".9"/><circle cx="12.5" cy="12.5" r="2.4" fill="none" stroke="#8fd36c" stroke-width=".5" opacity=".7"/><path d="M12.5 10.9 V14.1 M10.9 12.5 H14.1" stroke="#fff" stroke-width="1.3"/></svg></div>
<div class="t lnk" style="left:856.4px;top:191px;font-size:11px;letter-spacing:0.303px;">Neue Vorlage hinzufügen...</div>
<div class="a" style="left:834px;top:219px;width:16px;height:16px"><svg viewBox="0 0 16 16"><path d="M7.9 .8 L9.6 10.8 L8.2 11.6 L7.3 6Z" fill="#6f9fd6" stroke="#3f7cc4" stroke-width=".6"/>
<path d="M14.3 2.8 L8.8 9.6 L6.4 12.2 L5.5 11.2 L8 7.8Z" fill="#b5cfee" stroke="#5a90d0" stroke-width=".6"/>
<circle cx="4.2" cy="12.5" r="2.1" fill="#d8e6f6" stroke="#3a78c2" stroke-width="1.4"/>
<circle cx="9.6" cy="13.6" r="2.2" fill="#d8e6f6" stroke="#3a78c2" stroke-width="1.4"/></svg></div>
<div class="t lnk" style="left:856.4px;top:220px;font-size:11px;letter-spacing:0.196px;">Ausschneiden</div>
<div class="a" style="left:834px;top:241px;width:16px;height:16px"><svg viewBox="0 0 16 16"><defs><linearGradient id="cpg_51" x1="0" y1="0" x2="1" y2="1"><stop offset="0" stop-color="#fff"/><stop offset="1" stop-color="#c4daf8"/></linearGradient></defs><path d="M0.6 1.6 H6.799999999999999 L9.299999999999999 4.1 V12.6 H0.6Z" fill="url(#cpg_51)" stroke="#4f86d8" stroke-width="1" stroke-linejoin="round"/><path d="M6.799999999999999 1.6 V4.1 H9.299999999999999" fill="none" stroke="#4f86d8" stroke-width=".7" opacity=".7"/><path d="M7.0 5.5 H13.100000000000001 L15.600000000000001 8 V16.0 H7.0Z" fill="url(#cpg_51)" stroke="#4f86d8" stroke-width="1" stroke-linejoin="round"/><path d="M13.100000000000001 5.5 V8 H15.600000000000001" fill="none" stroke="#4f86d8" stroke-width=".7" opacity=".7"/></svg></div>
<div class="t lnk" style="left:856.4px;top:242px;font-size:11px;letter-spacing:0.204px;">Kopieren</div>
<div class="a" style="left:834px;top:263px;width:16px;height:16px"><svg viewBox="0 0 16 16"><defs><linearGradient id="psg_52" x1="0" y1="0" x2="1" y2="0"><stop offset="0" stop-color="#8c8c8c"/><stop offset="1" stop-color="#cfcfcf"/></linearGradient>
<linearGradient id="psd_52" x1="0" y1="0" x2="1" y2="1"><stop offset="0" stop-color="#fff"/><stop offset="1" stop-color="#d9d9d9"/></linearGradient></defs>
<rect x=".6" y="2" width="11.4" height="12.4" rx="1.2" fill="url(#psg_52)" stroke="#6a6a6a" stroke-width="1"/>
<path d="M3.6 2.6 V1.2 Q3.6 .5 4.3 .5 H8.3 Q9 .5 9 1.2 V2.6Z" fill="#dcdcdc" stroke="#6a6a6a" stroke-width=".8"/><path d="M7.0 4.8 H13.100000000000001 L15.600000000000001 7.3 V15.3 H7.0Z" fill="url(#psd_52)" stroke="#6e6e6e" stroke-width="1" stroke-linejoin="round"/><path d="M13.100000000000001 4.8 V7.3 H15.600000000000001" fill="none" stroke="#6e6e6e" stroke-width=".7" opacity=".7"/></svg></div>
<div class="t dk" style="left:856.4px;top:264px;font-size:11px;letter-spacing:0.362px;">Einfügen</div>
<div class="a" style="left:834px;top:285px;width:16px;height:16px"><svg viewBox="0 0 16 16"><defs><linearGradient id="pcg_53" x1="0" y1="0" x2="1" y2="1"><stop offset="0" stop-color="#fff3a0"/><stop offset=".5" stop-color="#f7d94c"/><stop offset="1" stop-color="#eeb82e"/></linearGradient></defs>
<g transform="rotate(-42 8 8)"><path d="M-1.6 8 L2 5.9 H15.2 Q17 5.9 17 8 Q17 10.1 15.2 10.1 H2Z" fill="url(#pcg_53)" stroke="#d08a2a" stroke-width=".9" stroke-linejoin="round"/>
<path d="M14 6 V10" stroke="#d9a066" stroke-width=".8"/><path d="M14.4 6.3 H15.3 Q16.6 6.4 16.6 8 Q16.6 9.6 15.3 9.7 H14.4Z" fill="#f3c9a8"/>
<path d="M-1.6 8 L2 6 V10Z" fill="#f0d2a0" stroke="#c98a3a" stroke-width=".6"/><path d="M-1.6 8 L-.2 7.2 V8.8Z" fill="#5a3a10"/>
<path d="M2.4 7.3 H13.6" stroke="#fffbd8" stroke-width=".8" opacity=".9"/></g></svg></div>
<div class="t lnk" style="left:856.4px;top:286px;font-size:11px;letter-spacing:0.067px;">Bearbeiten...</div>
<div class="a" style="left:834px;top:307px;width:16px;height:16px"><svg viewBox="0 0 16 16"><defs><radialGradient id="dlg_54" cx=".5" cy=".4" r=".7"><stop offset="0" stop-color="#f9915a"/><stop offset="1" stop-color="#e85a1c"/></radialGradient></defs>
<circle cx="8" cy="8" r="7.2" fill="url(#dlg_54)" stroke="#bf430f" stroke-width="1.4"/>
<path d="M6.2 6.2 L9.8 9.8 M9.8 6.2 L6.2 9.8" stroke="#fff" stroke-width="1.8" stroke-linecap="square"/></svg></div>
<div class="t lnk" style="left:856.4px;top:308px;font-size:11px;letter-spacing:-0.038px;">Löschen</div>
<div class="a" style="left:834px;top:329px;width:16px;height:16px"><svg viewBox="0 0 16 16"><defs><linearGradient id="exd_55" x1="0" y1="0" x2="1" y2="1"><stop offset="0" stop-color="#fff"/><stop offset="1" stop-color="#dedede"/></linearGradient></defs>
<path d="M2.5 .5 H11.5 L15.5 4.5 V15.5 H2.5Z" fill="url(#exd_55)" stroke="#6f6f6f" stroke-width="1" stroke-linejoin="round"/>
<path d="M11.5 .5 V4.5 H15.5" fill="none" stroke="#8a8a8a" stroke-width=".8"/>
<rect x=".5" y="4.8" width="12.4" height="7.6" rx="1.4" fill="#e4e4e4" stroke="#9a9a9a" stroke-width=".9"/>
<path d="M2.6 7H10.5" stroke="#f6f6f6" stroke-width="1.2"/>
<path d="M6.4 9.4 H10.6 V7.2 L15.3 11.3 L10.6 15.2 V13.2 H6.4Z" fill="#8a8a8a" stroke="#5c5c5c" stroke-width=".8" stroke-linejoin="round"/></svg></div>
<div class="t dk" style="left:856.4px;top:330px;font-size:11px;letter-spacing:0.135px;">Exportieren...</div>
<div class="a" style="left:834px;top:356px;width:16px;height:18px"><svg viewBox="0 0 16 18"><defs><linearGradient id="tvg_56" x1="0" y1="0" x2="1" y2="1"><stop offset="0" stop-color="#a6d2fb"/><stop offset=".45" stop-color="#74b4f3"/><stop offset="1" stop-color="#5c9fe8"/></linearGradient></defs>
<path d="M7.4 6.2 L2.2 2 M9 6.2 L14 2" stroke="#6a7da3" stroke-width="1.3" fill="none"/>
<rect x="1.1" y="6" width="13.9" height="12" rx=".8" fill="#3c3c3c" stroke="#fff" stroke-width=".6" stroke-opacity=".8"/>
<rect x="2" y="7" width="12.1" height="7.6" fill="url(#tvg_56)"/>
<rect x="1.6" y="15" width="12.9" height="1.6" fill="#6e6e6e"/><rect x="3.8" y="15.1" width="1.3" height="1.3" fill="#ee2222"/>
<path d="M6.3 15.8H13" stroke="#9a9a9a" stroke-width=".8" stroke-dasharray="1 .8"/>
<rect x="1.2" y="16.8" width="13.7" height="1.2" fill="#1c1c1c"/></svg></div>
<div class="t lnk" style="left:856.4px;top:359px;font-size:11px;letter-spacing:0.251px;">Video-Tutorials ansehen...</div>
<div class="a" style="left:831px;top:212px;width:237px;height:1px;background:#b9b9b9;"></div>
<div class="a" style="left:831px;top:351px;width:237px;height:1px;background:#b9b9b9;"></div>
<div class="a" style="left:827px;top:611px;width:254px;height:4px;background:#f5f5f5;"></div>
<div class="a" style="left:950px;top:614px;width:2px;height:2px;background:#fff;box-shadow:4px 0 #fff,8px 0 #fff"></div>
<div class="a" style="left:949px;top:613px;width:2px;height:2px;background:#7e7e7e;box-shadow:4px 0 #7e7e7e,8px 0 #7e7e7e"></div>
<div class="a" style="left:827px;top:615px;width:254px;height:23px;background:#c0c0c0;"></div>
<div class="t b" style="left:830.1px;top:619px;font-size:11px;letter-spacing:0.142px;">Information</div>
<div class="a" style="left:827px;top:638px;width:254px;height:138px;background:#ffffe1;"></div>
<div class="a" style="left:835px;top:647px;width:14px;height:14px"><svg viewBox="0 0 14 14"><defs><linearGradient id="ifg_57" x1="0" y1="0" x2="0" y2="1"><stop offset="0" stop-color="#86abe0"/><stop offset="1" stop-color="#4f80c6"/></linearGradient></defs>
<circle cx="7" cy="7" r="6.6" fill="#4179c9"/>
<circle cx="7" cy="7" r="5.3" fill="url(#ifg_57)" stroke="#b3cbec" stroke-width=".9"/>
<rect x="6.2" y="3.4" width="1.6" height="1.4" fill="#fff"/>
<path d="M5.6 6 H7.8 V9.1 H8.9 V10.3 H5.4 V9.1 H6.4 V7 H5.6Z" fill="#fff"/></svg></div>
<div class="t inf" style="left:854.5px;top:647px;letter-spacing:-0.098px;">Die Hinweisgruppe <span class="lnk u">Default</span> enthält noch</div>
<div class="t inf" style="left:854.5px;top:662px;letter-spacing:-0.054px;">nicht veröffentlichte Änderungen.</div>
<div class="t st" style="left:5.6px;top:784px;letter-spacing:0.103px;">C:\IBI-aws\Admin\Data.xml</div>
<div class="a" style="left:1072px;top:789px;width:12px;height:12px"><svg viewBox="0 0 12 12"><rect x="9" y="1" width="2" height="2" fill="#fff"/><rect x="8" y="0" width="2" height="2" fill="#8c8c8c"/><rect x="5" y="5" width="2" height="2" fill="#fff"/><rect x="4" y="4" width="2" height="2" fill="#8c8c8c"/><rect x="9" y="5" width="2" height="2" fill="#fff"/><rect x="8" y="4" width="2" height="2" fill="#8c8c8c"/><rect x="1" y="9" width="2" height="2" fill="#fff"/><rect x="0" y="8" width="2" height="2" fill="#8c8c8c"/><rect x="5" y="9" width="2" height="2" fill="#fff"/><rect x="4" y="8" width="2" height="2" fill="#8c8c8c"/><rect x="9" y="9" width="2" height="2" fill="#fff"/><rect x="8" y="8" width="2" height="2" fill="#8c8c8c"/></svg></div>
</body></html>
